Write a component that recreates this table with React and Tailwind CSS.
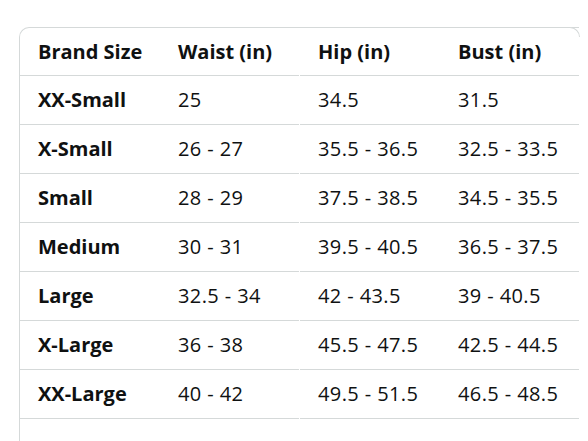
import React from "react";

const rows = [
  ["XX-Small", "25", "34.5", "31.5"],
  ["X-Small", "26 - 27", "35.5 - 36.5", "32.5 - 33.5"],
  ["Small", "28 - 29", "37.5 - 38.5", "34.5 - 35.5"],
  ["Medium", "30 - 31", "39.5 - 40.5", "36.5 - 37.5"],
  ["Large", "32.5 - 34", "42 - 43.5", "39 - 40.5"],
  ["X-Large", "36 - 38", "45.5 - 47.5", "42.5 - 44.5"],
  ["XX-Large", "40 - 42", "49.5 - 51.5", "46.5 - 48.5"],
];

function Row({ cells, header, h }) {
  const v = header ? "font-bold" : "tracking-[0.4px]";
  return (
    <div className={`flex ${h} text-[20px] text-[#0f1111]`}>
      <div className="w-[140px] border-b border-[#d5d9d9] pl-[18px] flex items-center font-bold">
        {cells[0]}
      </div>
      <div className={`w-[139px] mr-px border-b border-[#d5d9d9] pl-[18px] flex items-center ${v}`}>
        {cells[1]}
      </div>
      <div className={`w-[140px] border-b border-[#d5d9d9] pl-[18px] flex items-center ${v}`}>
        {cells[2]}
      </div>
      <div className={`flex-1 border-b border-[#d5d9d9] pl-[18px] flex items-center ${v}`}>
        {cells[3]}
      </div>
    </div>
  );
}

export default function App() {
  return (
    <div
      className="w-[588px] h-[441px] overflow-hidden bg-white pt-[27px] pl-[19px]"
      style={{ fontFamily: '"Open Sans", "Noto Sans", sans-serif' }}
    >
      <div className="relative w-[560px] border-l border-t border-[#d5d9d9] rounded-tl-[10px] pb-[40px]">
        <div className="absolute -top-px -right-px w-[10px] h-[10px] border-t border-r border-[#d5d9d9] rounded-tr-[10px] bg-white"></div>
        <Row cells={["Brand Size", "Waist (in)", "Hip (in)", "Bust (in)"]} header h="h-[48px]" />
        {rows.map((r) => (
          <Row key={r[0]} cells={r} h="h-[49px]" />
        ))}
      </div>
    </div>
  );
}
